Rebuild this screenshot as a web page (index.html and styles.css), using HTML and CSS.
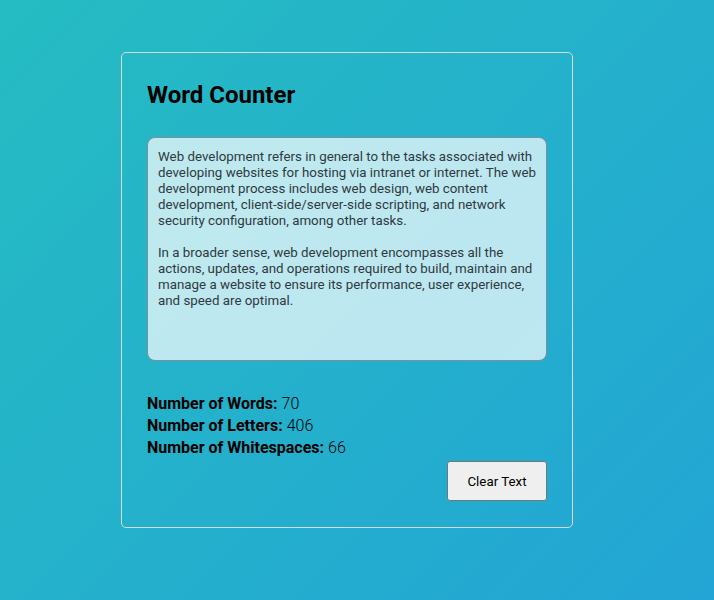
FILE: index.html
```html
<!DOCTYPE html>
<html lang="en">
<head>
<meta charset="utf-8">
<title>Word Counter</title>
<link rel="stylesheet" href="styles.css">
</head>
<body>
<div class="card">
  <h1 class="title">Word Counter</h1>
  <textarea class="input">Web development refers in general to the tasks associated with developing websites for hosting via intranet or internet. The web development process includes web design, web content development, client-side/server-side scripting, and network security configuration, among other tasks.

In a broader sense, web development encompasses all the actions, updates, and operations required to build, maintain and manage a website to ensure its performance, user experience, and speed are optimal.</textarea>
  <div class="stats">
    <div class="stat"><b>Number of Words:</b> <span class="val">70</span></div>
    <div class="stat"><b>Number of Letters:</b> <span class="val">406</span></div>
    <div class="stat"><b>Number of Whitespaces:</b> <span class="val">66</span></div>
  </div>
  <div class="actions">
    <button class="btn" type="button">Clear Text</button>
  </div>
</div>
</body>
</html>
```
FILE: styles.css
```css
html, body {
  margin: 0;
  height: 100%;
}
body {
  background: linear-gradient(135deg, #25bcc2 0%, #23a5d5 100%);
  font-family: Roboto, "Liberation Sans", sans-serif;
  padding: 52px 0 0 121px;
  box-sizing: border-box;
}
.card {
  width: 452px;
  box-sizing: border-box;
  border: 1px solid #d9d9d9;
  border-radius: 5px;
  padding: 25px 25px 26px;
}
.title {
  margin: 0;
  font-size: 24px;
  font-weight: 700;
  color: #000;
  line-height: 32px;
  padding-top: 1px;
}
.input {
  display: block;
  box-sizing: border-box;
  width: 400px;
  height: 224px;
  margin: 26px 0 0;
  padding: 11px 10px 9px;
  border: 1px solid #7f8f95;
  border-radius: 8px;
  background: rgba(255, 255, 255, 0.7);
  font-family: Roboto, "Liberation Sans", sans-serif;
  font-size: 13.33px;
  line-height: 16px;
  color: #2f3a40;
  resize: none;
  outline: none;
}
.stats {
  margin-top: 32px;
  font-size: 16px;
  line-height: 22px;
  color: #000;
}
.stat b {
  font-weight: 700;
}
.val {
  font-weight: 300;
}
.actions {
  display: flex;
  justify-content: flex-end;
  margin-top: 2px;
}
.btn {
  width: 100px;
  height: 40px;
  background: #efefef;
  border: 1px solid #767676;
  border-radius: 3px;
  font-family: Roboto, "Liberation Sans", sans-serif;
  font-size: 13.33px;
  color: #000;
}
```
